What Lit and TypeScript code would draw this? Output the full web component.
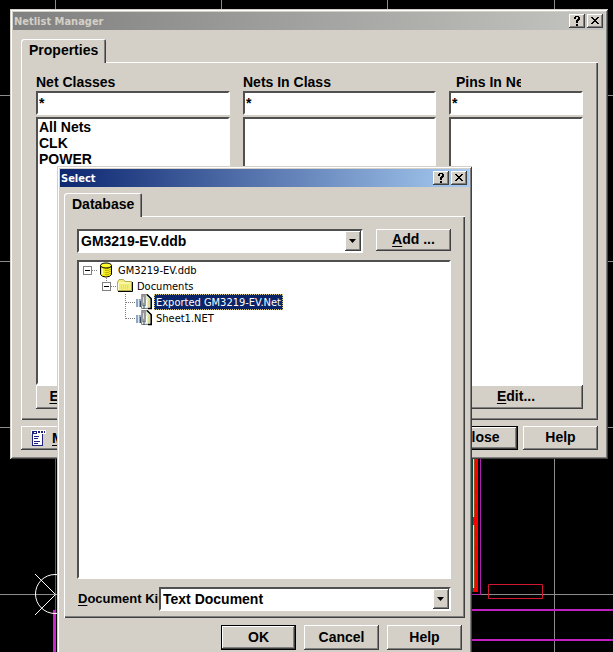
import { LitElement, html, svg, css, nothing } from "lit";
import { customElement, property } from "lit/decorators.js";
import { classMap } from "lit/directives/class-map.js";

const controls = css`
  * { box-sizing: border-box; }
  button, input, select { font: inherit; color: inherit; margin: 0; border-radius: 0; outline: none; }
  button {
    appearance: none;
    padding: 0 0 2px;
    background: #d4d0c8;
    border: 0;
    box-shadow: inset -1px -1px #404040, inset 1px 1px #fff, inset -2px -2px #808080;
    white-space: nowrap;
  }
  .sunken {
    background: #fff;
    border: 2px solid;
    border-color: #505050 #fff #fff #505050;
  }
`;

/** A classic raised window with a gradient title bar. */
@customElement("tool-window")
export class ToolWindow extends LitElement {
  @property() caption = "";
  @property({ type: Boolean, reflect: true }) active = false;

  static styles = [controls, css`
    :host {
      display: block;
      box-sizing: border-box;
      padding: 3px;
      background: #d4d0c8;
      box-shadow: inset 1px 1px #d4d0c8, inset -1px -1px #404040, inset 2px 2px #fff, inset -2px -2px #808080;
    }
    .title {
      display: flex;
      align-items: center;
      gap: 2px;
      height: 18px;
      padding: 0 2px 0 1px;
      color: #d4d0c8;
      background: linear-gradient(90deg, #808080, #c4c4c0);
      font: bold 11px "DejaVu Sans Condensed", "DejaVu Sans", sans-serif;
    }
    :host([active]) .title { color: #fff; background: linear-gradient(90deg, #0c2670, #a6caf0); }
    .caption { flex: 1; white-space: nowrap; }
    button { width: 16px; height: 14px; flex: none; padding: 0; color: #000; }
    svg { display: block; margin: auto; }
  `];

  render() {
    return html`
      <div class="title">
        <span class="caption">${this.caption}</span>
        <button aria-label="Help">
          <svg width="16" height="14" fill="#000" shape-rendering="crispEdges">
            <path d="M5 3H6V2H10V3H11V6H10V7H9V9H7V6H8V5H9V3H7V5H5ZM7 10H9V12H7Z" />
          </svg>
        </button>
        <button aria-label="Close">
          <svg width="16" height="14" fill="#000" shape-rendering="crispEdges">
            <path d="M4 3H6V4H7V5H9V4H10V3H12V4H11V5H10V6H9V7H10V8H11V9H12V10H10V9H9V8H7V9H6V10H4V9H5V8H6V7H7V6H6V5H5V4H4Z" />
          </svg>
        </button>
      </div>
      <slot></slot>`;
  }
}

/** One tab with its raised page below it. */
@customElement("tab-page")
export class TabPage extends LitElement {
  @property() caption = "";

  static styles = [controls, css`
    :host { display: block; }
    .tab {
      display: block;
      height: 24px;
      padding: 0 8px 2px;
      margin-bottom: -1px;
      position: relative;
      border-radius: 3px 2px 0 0;
      box-shadow: inset 1px 1px #fff, inset -1px 0 #404040, inset -2px 0 #808080;
    }
    .page { box-shadow: inset 1px 1px #fff, inset -1px -1px #404040, inset -2px -2px #808080; }
  `];

  render() {
    return html`
      <button class="tab" role="tab" aria-selected="true">${this.caption}</button>
      <div class="page" role="tabpanel"><slot></slot></div>`;
  }
}

type Icon = "database" | "folder" | "sheet";
interface Node { label: string; icon: Icon; guides: string[]; selected?: boolean; }

const nodes: Node[] = [
  { label: "GM3219-EV.ddb", icon: "database", guides: ["root"] },
  { label: "Documents", icon: "folder", guides: ["", "open"] },
  { label: "Exported GM3219-EV.Net", icon: "sheet", guides: ["", "", "tee"], selected: true },
  { label: "Sheet1.NET", icon: "sheet", guides: ["", "", "end"] },
];

const icons = {
  database: svg`
    <path d="M2.500 3.500V12.500Q4 15 8 15T13.500 12.500V3.500Z" fill="#f4ec10" stroke="#000" />
    <path d="M8 6V14.500M10 6V14M12 5V13" stroke="#8c8200" stroke-dasharray="1 1" />
    <ellipse cx="8" cy="3.500" rx="5.500" ry="2.500" fill="#fffb30" stroke="#000" />
    <path d="M4.500 6.500V12.500" stroke="#fffca0" />`,
  folder: svg`
    <path d="M.5 12.500V4L2 1.500H6.500L8 3.500H14.500V12.500Z" fill="#f2ec78" stroke="#b5ac55" />
    <path d="M1.500 12V5H13.500" fill="none" stroke="#ffffd0" />
    <path d="M1 13.500H15.500V4" fill="none" stroke="#000" />
    <path d="M4 8H12M4 10H12" stroke="#ddd34d" stroke-dasharray="1 1" />`,
  sheet: svg`
    <path d="M5.500 .500H11L14.500 4V14.500H5.500Z" fill="#e2ead8" stroke="#888" />
    <path d="M11 .500L15.500 5V14.500H12" fill="none" stroke="#000" stroke-width="1.500" />
    <path d="M0 5H5V13H0Z" fill="#8fa6bd" />
    <path d="M2.500 5V13" stroke="#dfe8ee" />
    <path d="M5 1H10V12H5Z" fill="#9a9a9a" />
    <path d="M7.500 3V9" stroke="#ddd" />
    <path d="M4.500 7V13M8 11V15" stroke="#375174" />
    <path d="M10.500 6V13" stroke="#fff" />
    <path d="M13 5V13" stroke="#d2d83c" />`,
};

const guide = (kind: string) => svg`
  <g fill="none" stroke="#808080" stroke-dasharray="1 1">
    ${kind === "root" ? svg`<path d="M13 8.500H19" />` : nothing}
    ${kind === "open" ? svg`<path d="M13 8.500H19M8.500 0V4" />` : nothing}
    ${kind === "tee" ? svg`<path d="M8.500 0V16M9 8.500H19" />` : nothing}
    ${kind === "end" ? svg`<path d="M8.500 0V9M9 8.500H19" />` : nothing}
  </g>
  ${kind === "root" || kind === "open"
    ? svg`<rect x="4.500" y="4.500" width="8" height="8" fill="#fff" stroke="#808080" /><path d="M6 8.500H11" stroke="#000" />`
    : nothing}`;

@customElement("document-tree")
export class DocumentTree extends LitElement {
  static styles = css`
    :host { display: block; font: 11px/16px "DejaVu Sans Condensed", "DejaVu Sans", sans-serif; }
    .row { display: flex; height: 16px; }
    .row svg { flex: none; display: block; }
    .label { margin-left: 2px; padding: 1px 2px 0; line-height: 15px; white-space: nowrap; }
    .selected { background: #0a246a; color: #fff; outline: 1px dotted #d8c880; outline-offset: -1px; }
  `;

  render() {
    return html`<div role="tree">${nodes.map((n) => html`
      <div class="row" role="treeitem">
        ${n.guides.map((g) => html`<svg width="19" height="16">${guide(g)}</svg>`)}
        <svg width="16" height="16">${icons[n.icon]}</svg>
        <span class=${classMap({ label: true, selected: !!n.selected })}>${n.label}</span>
      </div>`)}</div>`;
  }
}

const columns = [
  { id: "classes", title: "Net Classes", items: ["All Nets", "CLK", "POWER"] },
  { id: "nets", title: "Nets In Class", items: [] },
  { id: "pins", title: "Pins In Net", items: [] },
];

@customElement("app-root")
export class AppRoot extends LitElement {
  static styles = [controls, css`
    :host {
      display: block;
      position: relative;
      height: 100vh;
      overflow: hidden;
      background: #000;
      color: #000;
      font: bold 14px/16px "Liberation Sans", Arial, sans-serif;
    }
    .board { position: absolute; inset: 0; width: 100%; height: 100%; }
    .manager { position: absolute; left: 10px; right: 5px; top: 9px; }
    .select { position: absolute; left: 57px; right: 141px; top: 166px; }

    .manager-body { padding: 9px 7px 6px 8px; }
    .columns { display: grid; grid-template-columns: 194fr 193fr 134fr; column-gap: 13px; padding: 12px 15px 11px; }
    .column { display: flex; flex-direction: column; min-width: 0; }
    .column label { height: 17px; overflow: hidden; white-space: nowrap; }
    .column.pins label { margin-left: 7px; width: 65px; }
    .column input { width: 100%; height: 24px; padding: 0 1px; }
    .list { height: 268px; margin: 2px 0 0; padding: 0 1px; list-style: none; }
    .edit { height: 24px; width: 100%; }
    .classes .edit { width: 65px; }
    u { text-underline-offset: 2px; }
    .actions { display: flex; gap: 5px; margin-top: 6px; }
    .actions button { width: 75px; height: 24px; }
    .actions .menu { display: flex; align-items: center; gap: 5px; padding: 0 0 0 10px; margin-right: auto; }
    button.default { border: 1px solid #000; }

    .select-body { padding: 6px 4px 20px; }
    .database { display: flex; flex-direction: column; padding: 13px 14px 7px 13px; }
    .source { display: flex; gap: 13px; margin-bottom: 7px; }
    .source .combo { flex: 1; }
    .source button { width: 75px; height: 22px; }
    .combo { display: grid; grid-template-columns: 1fr 16px; height: 24px; min-width: 0; }
    .combo select { grid-area: 1 / 1 / 2 / 3; appearance: none; width: 100%; min-width: 0; padding: 0 18px 0 2px; background: transparent; border: 0; }
    .combo .arrow {
      grid-area: 1 / 2;
      pointer-events: none;
      background: #d4d0c8;
      box-shadow: inset -1px -1px #404040, inset 1px 1px #fff, inset -2px -2px #808080;
    }
    .tree { height: 319px; margin-bottom: 8px; }
    .kind { display: flex; align-items: center; }
    .kind label { flex: none; width: 82px; padding-left: 1px; overflow: hidden; white-space: nowrap; font-size: 13px; }
    .kind .combo { flex: 1; }
    .answers { display: flex; justify-content: flex-end; gap: 8px; margin-top: 7px; padding-right: 3px; }
    .answers button { width: 75px; height: 25px; }
  `];

  private combo(id: string, name: string, value: string) {
    return html`
      <div class="combo sunken">
        <select id=${id} aria-label=${name}><option>${value}</option></select>
        <svg class="arrow" width="16" height="20"><path d="M4 8H11L7.500 12Z" /></svg>
      </div>`;
  }

  private board() {
    return html`
      <svg class="board" fill="none" aria-hidden="true">
        <path d="M55.500 0V600M221.500 0V20M387.500 0V20M554.500 0V2000M0 95.500H3000M0 261.500H3000M0 427.500H3000M0 594.500H3000" stroke="#8c8c8c" />
        <path d="M55.500 440V620" stroke="#b020b0" />
        <path d="M54.500 610V2000" stroke="#c828c8" stroke-width="3" />
        <path d="M460 610H3000M460 640H3000" stroke="#c020c0" stroke-width="2" />
        <path d="M475.500 440V592" stroke="#f00" stroke-width="5" />
        <path d="M472.500 440V592" stroke="#0c4038" />
        <path d="M474.500 440V517M474.500 525V588" stroke="#a04818" />
        <path d="M475.500 462V586" stroke="#9010a0" stroke-dasharray="4 10" />
        <path d="M473.500 440V517M473.500 525V588" stroke="#ffe860" />
        <path d="M480.500 440V594.500H460" stroke="#b020b0" />
        <path d="M488.500 584.500H542.500V598.500H488.500Z" stroke="#d01830" />
        <path d="M35 574L55.500 594.500L35 615" stroke="#fff" />
        <circle cx="55" cy="594" r="19.500" stroke="#fff" />
      </svg>`;
  }

  render() {
    return html`
      ${this.board()}
      <tool-window class="manager" caption="Netlist Manager">
        <div class="manager-body">
          <tab-page caption="Properties">
            <div class="columns">
              ${columns.map((c) => html`
                <section class="column ${c.id}">
                  <label for=${c.id}>${c.title}</label>
                  <input class="sunken" id=${c.id} value="*" />
                  <ul class="list sunken">${c.items.map((i) => html`<li>${i}</li>`)}</ul>
                  <button class="edit"><u>E</u>dit...</button>
                </section>`)}
            </div>
          </tab-page>
          <div class="actions">
            <button class="menu">
              <svg width="16" height="16" shape-rendering="crispEdges">
                <path d="M0 0H15V4H12V16H1V4H0Z" fill="#fff" />
                <path d="M1 1H6V4H1ZM7 1H9V3H7ZM10 1H12V3H10ZM13 1H14V3H13Z" fill="#202080" />
                <path d="M3 2H5V3H3Z" fill="#fff" />
                <path d="M1 4H2V16H1ZM11 4H12V16H11ZM3 6H8V7H3ZM3 8H7V9H3ZM3 11H9V12H3ZM3 13H7V14H3ZM1 15H12V16H1Z" fill="#202080" />
              </svg>
              <span><u>M</u>enu</span>
            </button>
            <button class="default">Close</button>
            <button>Help</button>
          </div>
        </div>
      </tool-window>

      <tool-window class="select" caption="Select" active>
        <div class="select-body">
          <tab-page caption="Database">
            <div class="database">
              <div class="source">
                ${this.combo("source", "Database", "GM3219-EV.ddb")}
                <button><u>A</u>dd ...</button>
              </div>
              <div class="tree sunken"><document-tree></document-tree></div>
              <div class="kind">
                <label for="kind"><u>D</u>ocument Kind</label>
                ${this.combo("kind", "Document Kind", "Text Document")}
              </div>
            </div>
          </tab-page>
          <div class="answers">
            <button class="default">OK</button>
            <button>Cancel</button>
            <button>Help</button>
          </div>
        </div>
      </tool-window>`;
  }
}
